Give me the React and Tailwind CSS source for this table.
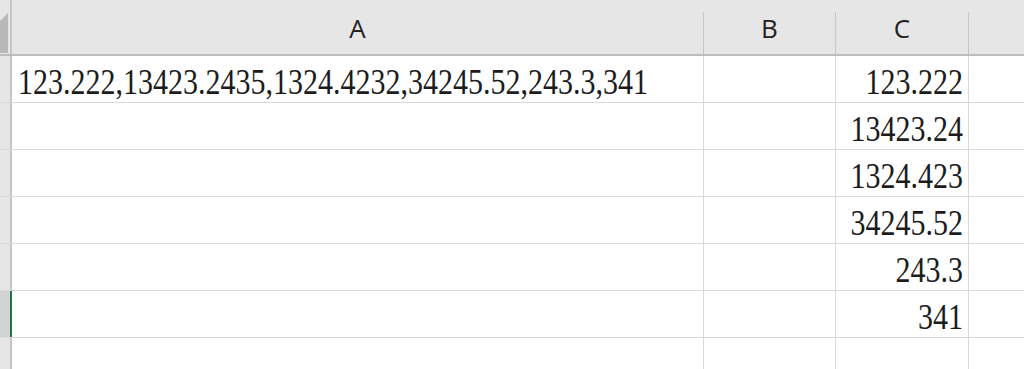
import React from 'react';

const colC = ['123.222', '13423.24', '1324.423', '34245.52', '243.3', '341'];
const cellA = '123.222,13423.2435,1324.4232,34245.52,243.3,341';

const HeaderCell = ({ label, className }) => (
  <div className={`flex flex-col ${className}`}>
    <div className="h-[12px]" />
    <div className="flex-1 border-r border-[#c6c6c6] flex justify-center pt-[1px] text-[26px] leading-[30px] text-[#222222]">
      {label}
    </div>
  </div>
);

const Row = ({ a, c, selected }) => (
  <div className="flex h-[47px] border-b border-[#d9d9d9]">
    <div
      className={`w-[12px] shrink-0 border-r-2 ${
        selected ? 'bg-[#d2d2d2] border-[#217346]' : 'bg-[#e6e6e6] border-[#c6c6c6]'
      }`}
    />
    <div className="w-[692px] shrink-0 border-r border-[#d9d9d9] flex items-end pl-[6px] pb-[2px] font-['Liberation_Serif','Times_New_Roman',serif] text-[30px] leading-[30px] text-[#1c1c1c] whitespace-nowrap">
      <span className="inline-block origin-bottom scale-y-[1.2]">{a}</span>
    </div>
    <div className="w-[132px] shrink-0 border-r border-[#d9d9d9]" />
    <div className="w-[133px] shrink-0 border-r border-[#d9d9d9] flex items-end justify-end pr-[5px] pb-[2px] font-['Liberation_Serif','Times_New_Roman',serif] text-[30px] leading-[30px] text-[#1c1c1c]">
      <span className="inline-block origin-bottom scale-y-[1.2]">{c}</span>
    </div>
    <div className="flex-1" />
  </div>
);

export default function App() {
  return (
    <div className="w-[1024px] h-[369px] overflow-hidden bg-white font-['Open_Sans','Noto_Sans',sans-serif]">
      <div className="flex h-[56px] bg-[#e6e6e6] border-b-2 border-[#bdbdbd]">
        <div className="w-[12px] shrink-0 border-r-2 border-[#c6c6c6]">
          <svg width="10" height="54" className="block">
            <polygon points="8,13 8,53 0,53 0,21" fill="#b9b9b9" />
          </svg>
        </div>
        <HeaderCell label="A" className="w-[692px] shrink-0" />
        <HeaderCell label="B" className="w-[132px] shrink-0" />
        <HeaderCell label="C" className="w-[133px] shrink-0" />
        <div className="flex-1" />
      </div>
      {[0, 1, 2, 3, 4, 5, 6].map((i) => (
        <Row key={i} a={i === 0 ? cellA : ''} c={colC[i] || ''} selected={i === 5} />
      ))}
    </div>
  );
}
